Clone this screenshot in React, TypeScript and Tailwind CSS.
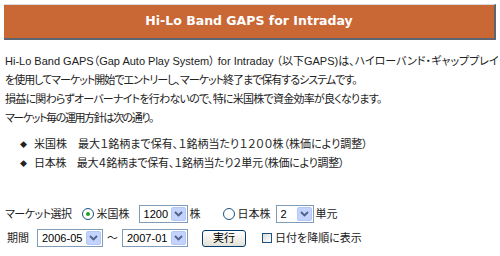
import React from 'react';

const jp = '"Liberation Sans", "Noto Sans CJK JP", sans-serif';

const FakeSelect: React.FC<{ value: string; width: string }> = ({ value, width }) => (
  <div className={`flex items-center h-[18px] border border-[#7f9db9] bg-white ${width}`}>
    <span className="flex-1 pl-[4px] text-[11px] leading-none text-black">{value}</span>
    <span className="flex items-center justify-center w-[15px] h-[14px] mr-[1px] rounded-[2px] bg-[#c3d3fd] border border-[#b5c8f5]">
      <svg width="9" height="6" viewBox="0 0 9 6">
        <path d="M1 1 L4.5 4.5 L8 1" fill="none" stroke="#4d6185" strokeWidth="1.8" />
      </svg>
    </span>
  </div>
);

const Radio: React.FC<{ checked?: boolean }> = ({ checked }) => (
  <span className="flex items-center justify-center w-[12px] h-[12px] rounded-full border border-[#1c5180] bg-white">
    {checked && <span className="w-[4px] h-[4px] rounded-full bg-[#21a121]" />}
  </span>
);

const App: React.FC = () => {
  return (
    <div className="w-[500px] h-[256px] bg-white overflow-hidden text-[#222] text-[11px]" style={{ fontFamily: jp }}>
      <div className="mt-[4px] mx-[4px] h-[36px] bg-[#c96735] border-t border-t-[#d6dade] border-b-2 border-b-[#5d6670] border-r-2 border-r-[#5d6670] flex items-center justify-center">
        <h1 className="text-white font-bold text-[12.5px]" style={{ fontFamily: '"DejaVu Sans", sans-serif' }}>
          Hi-Lo Band GAPS for Intraday
        </h1>
      </div>

      <div className="px-[5px] mt-[12px]" style={{ fontFeatureSettings: '"palt"' }}>
        <p className="leading-[19px] whitespace-nowrap">
          Hi-Lo Band GAPS（Gap Auto Play System） for Intraday （以下GAPS)は、ハイローバンド・ギャッププレイ
        </p>
        <p className="leading-[19px] whitespace-nowrap tracking-[-1px]">を使用してマーケット開始でエントリーし、マーケット終了まで保有するシステムです。</p>
        <p className="leading-[19px] whitespace-nowrap tracking-[-0.75px]">損益に関わらずオーバーナイトを行わないので、特に米国株で資金効率が良くなります。</p>
        <p className="leading-[19px] whitespace-nowrap tracking-[-1.4px]">マーケット毎の運用方針は次の通り。</p>

        <ul className="mt-[7px] pl-[15px]">
          <li className="flex items-center leading-[19px] whitespace-nowrap">
            <span className="text-[7px] mr-[7px]">◆</span>
            米国株　最大１銘柄まで保有、１銘柄当たり１２００株（株価により調整）
          </li>
          <li className="flex items-center leading-[19px] whitespace-nowrap">
            <span className="text-[7px] mr-[7px]">◆</span>
            <span className="tracking-[-0.3px]">日本株　最大４銘柄まで保有、１銘柄当たり２単元（株価により調整）</span>
          </li>
        </ul>

        <div className="mt-[32px] flex items-center h-[18px]">
          <span className="tracking-[-0.5px]">マーケット選択</span>
          <span className="ml-[10px]"><Radio checked /></span>
          <span className="ml-[3px] mr-[9px]">米国株</span>
          <FakeSelect value="1200" width="w-[49px]" />
          <span className="ml-[2px]">株</span>
          <span className="ml-[22px]"><Radio /></span>
          <span className="ml-[3px] mr-[5px]">日本株</span>
          <FakeSelect value="2" width="w-[38px]" />
          <span className="ml-[2px]">単元</span>
        </div>

        <div className="mt-[6px] flex items-center h-[18px]">
          <span className="ml-[2px] mr-[8px]">期間</span>
          <FakeSelect value="2006-05" width="w-[66px]" />
          <span className="mx-[4px]">～</span>
          <FakeSelect value="2007-01" width="w-[66px]" />
          <button className="ml-[14px] w-[44px] h-[17px] rounded-[3px] border border-[#003c74] bg-gradient-to-b from-white to-[#e3e1d6] text-[11px] leading-none text-black">
            実行
          </button>
          <span className="ml-[16px] w-[10px] h-[10px] border border-[#1c5180] bg-gradient-to-br from-[#dcdcd6] to-white" />
          <span className="ml-[3px]">日付を降順に表示</span>
        </div>
      </div>
    </div>
  );
};

export default App;
